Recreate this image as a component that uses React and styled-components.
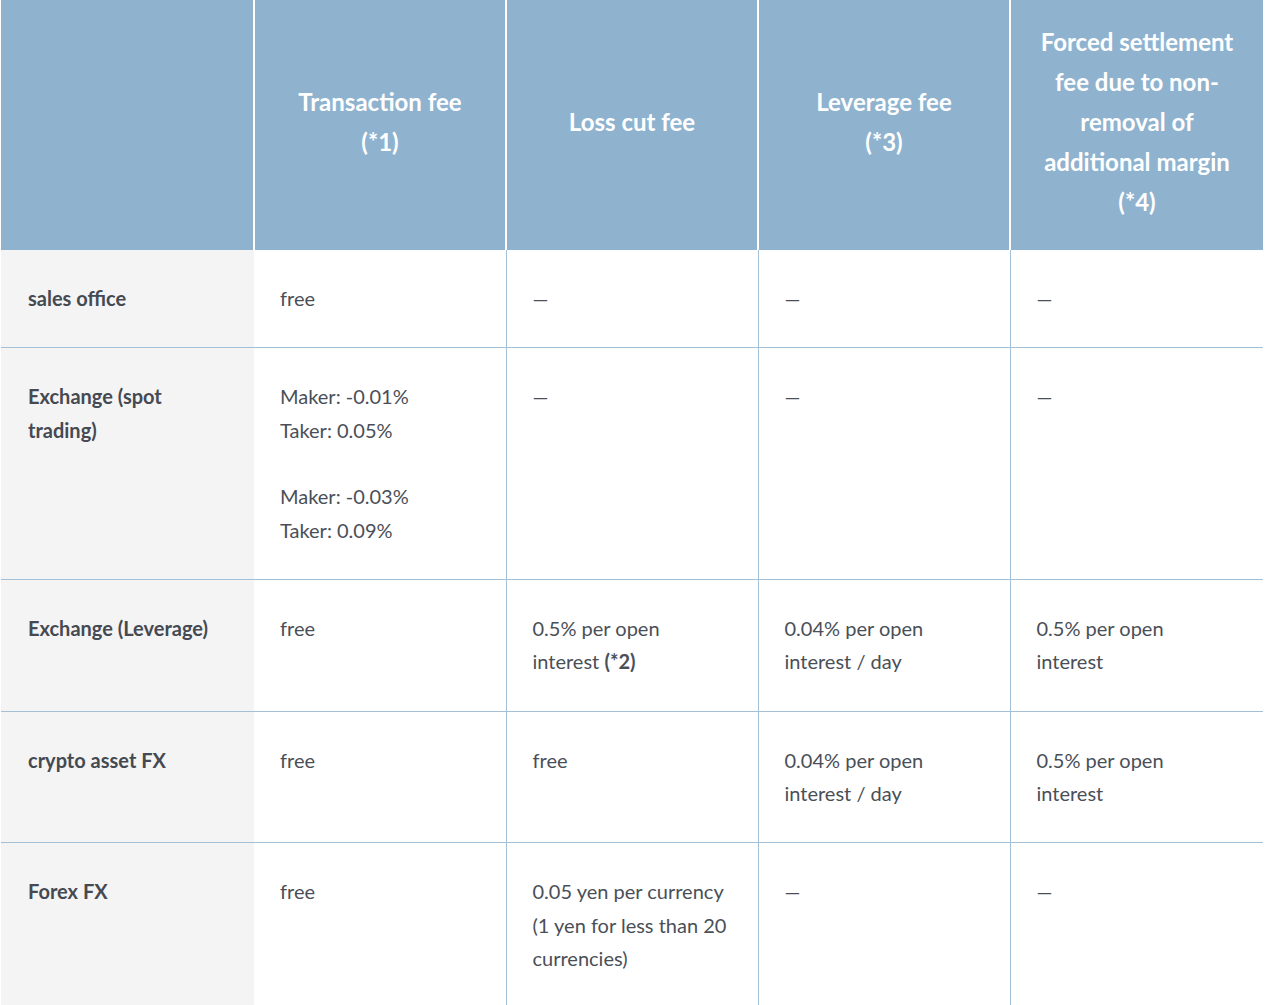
import React from 'react';
import styled, { createGlobalStyle } from 'styled-components';

const GlobalStyle = createGlobalStyle`
  body {
    margin: 0;
    background: #ffffff;
    font-family: Lato, "Liberation Sans", sans-serif;
  }
`;

const Wrapper = styled.div`
  padding-left: 1px;
  width: 1262px;
`;

const Table = styled.table`
  width: 1262px;
  border-collapse: collapse;
  table-layout: fixed;
  color: #4a4f57;
`;

const HeadCell = styled.th`
  background: #8fb3cf;
  color: #ffffff;
  font-size: 24px;
  font-weight: 700;
  line-height: 40px;
  text-align: center;
  vertical-align: middle;
  padding: 22px 20px 28px;
  height: 200px;
  border-left: 2px solid #ffffff;
  &:first-child {
    border-left: none;
  }
`;

const Row = styled.tr`
  border-top: 1px solid #a3c0d9;
  &:first-child {
    border-top: none;
  }
`;

const LabelCell = styled.th`
  background: #f4f4f4;
  font-size: 20px;
  font-weight: 700;
  line-height: 33.33px;
  text-align: left;
  vertical-align: top;
  padding: 32px 26px 32px 27px;
  color: #454a52;
`;

const Cell = styled.td`
  font-size: 20px;
  font-weight: 400;
  line-height: 33.33px;
  text-align: left;
  vertical-align: top;
  padding: 32px 31px 32px 26px;
  border-left: ${p => (p.$noLine ? 'none' : '1px solid #a3c0d9')};
`;

const Note = styled.b`
  font-weight: 700;
`;

const DASH = '—';

const rows = [
  {
    label: 'sales office',
    cells: ['free', DASH, DASH, DASH],
  },
  {
    label: 'Exchange (spot trading)',
    cells: [
      <>Maker: -0.01%<br />Taker: 0.05%<br /><br />Maker: -0.03%<br />Taker: 0.09%</>,
      DASH,
      DASH,
      DASH,
    ],
  },
  {
    label: 'Exchange (Leverage)',
    cells: [
      'free',
      <>0.5% per open interest <Note>(*2)</Note></>,
      '0.04% per open interest / day',
      '0.5% per open interest',
    ],
  },
  {
    label: 'crypto asset FX',
    cells: ['free', 'free', '0.04% per open interest / day', '0.5% per open interest'],
  },
  {
    label: 'Forex FX',
    cells: ['free', '0.05 yen per currency (1 yen for less than 20 currencies)', DASH, DASH],
  },
];

export default function App() {
  return (
    <>
      <GlobalStyle />
      <Wrapper>
        <Table>
          <colgroup>
            <col style={{ width: '253px' }} />
            <col style={{ width: '252px' }} />
            <col style={{ width: '252px' }} />
            <col style={{ width: '252px' }} />
            <col style={{ width: '253px' }} />
          </colgroup>
          <thead>
            <tr>
              <HeadCell />
              <HeadCell>Transaction fee<br />(*1)</HeadCell>
              <HeadCell>Loss cut fee</HeadCell>
              <HeadCell>Leverage fee<br />(*3)</HeadCell>
              <HeadCell>Forced settlement fee due to non-removal of additional margin (*4)</HeadCell>
            </tr>
          </thead>
          <tbody>
            {rows.map(row => (
              <Row key={row.label}>
                <LabelCell>{row.label}</LabelCell>
                {row.cells.map((c, i) => (
                  <Cell key={i} $noLine={i === 0}>{c}</Cell>
                ))}
              </Row>
            ))}
          </tbody>
        </Table>
      </Wrapper>
    </>
  );
}
